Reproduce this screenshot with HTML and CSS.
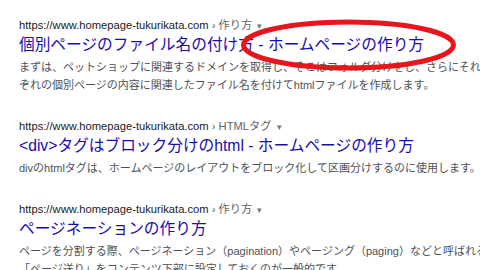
FILE: index.html
```html
<!DOCTYPE html>
<html lang="ja">
<head>
    <meta charset="UTF-8">
    <title>ホームページの作り方 - 検索結果</title>
    <link rel="stylesheet" href="styles.css">
</head>
<body>
    <div class="results">
        <div class="result">
            <div class="result-url">https://www.homepage-tukurikata.com <span class="crumb">› 作り方</span> <span class="caret">▾</span></div>
            <a href="#" class="result-title">個別ページのファイル名の付け方 - ホームページの作り方</a>
            <div class="result-snippet">まずは、ペットショップに関連するドメインを取得し、そこはフォルダ分けをし、さらにそれ<br>ぞれの個別ページの内容に関連したファイル名を付けてhtmlファイルを作成します。</div>
        </div>

        <div class="result">
            <div class="result-url">https://www.homepage-tukurikata.com <span class="crumb">› HTMLタグ</span> <span class="caret">▾</span></div>
            <a href="#" class="result-title">&lt;div&gt;タグはブロック分けのhtml - ホームページの作り方</a>
            <div class="result-snippet">divのhtmlタグは、ホームページのレイアウトをブロック化して区画分けするのに使用します。</div>
        </div>

        <div class="result">
            <div class="result-url">https://www.homepage-tukurikata.com <span class="crumb">› 作り方</span> <span class="caret">▾</span></div>
            <a href="#" class="result-title">ページネーションの作り方</a>
            <div class="result-snippet">ページを分割する際、ページネーション（pagination）やページング（paging）などと呼ばれる<br>「ページ送り」をコンテンツ下部に設定しておくのが一般的です。</div>
        </div>

        <!-- red marker drawn over the first title -->
        <svg class="marker" width="230" height="56" viewBox="0 0 230 56">
            <ellipse cx="116.5" cy="28" rx="105" ry="23" fill="none" stroke="#e8151d" stroke-width="5"/>
        </svg>
    </div>
</body>
</html>
```

FILE: styles.css
```css
body {
    margin: 0;
    background: #fff;
    overflow: hidden;
    font-family: 'Liberation Sans', Arial, 'Noto Sans CJK JP', sans-serif;
}

.results {
    position: relative;
    padding: 15px 0 0 19px;
}

.result {
    margin-bottom: 22px;
}

.result-url {
    height: 20px;
    line-height: 20px;
    font-size: 11.2px;
    color: #202124;
    white-space: nowrap;
}

.crumb {
    color: #5f6368;
}

.caret {
    color: #70757a;
    font-size: 9px;
    margin-left: 2px;
}

.result-title {
    display: block;
    height: 20px;
    line-height: 20px;
    font-size: 15.7px;
    color: #1a0dab;
    text-decoration: none;
    white-space: nowrap;
}

.result-snippet {
    margin-top: 3px;
    line-height: 18px;
    font-size: 11px;
    color: #4d5156;
    white-space: nowrap;
}

.marker {
    position: absolute;
    left: 232px;
    top: 17px;
}
```
